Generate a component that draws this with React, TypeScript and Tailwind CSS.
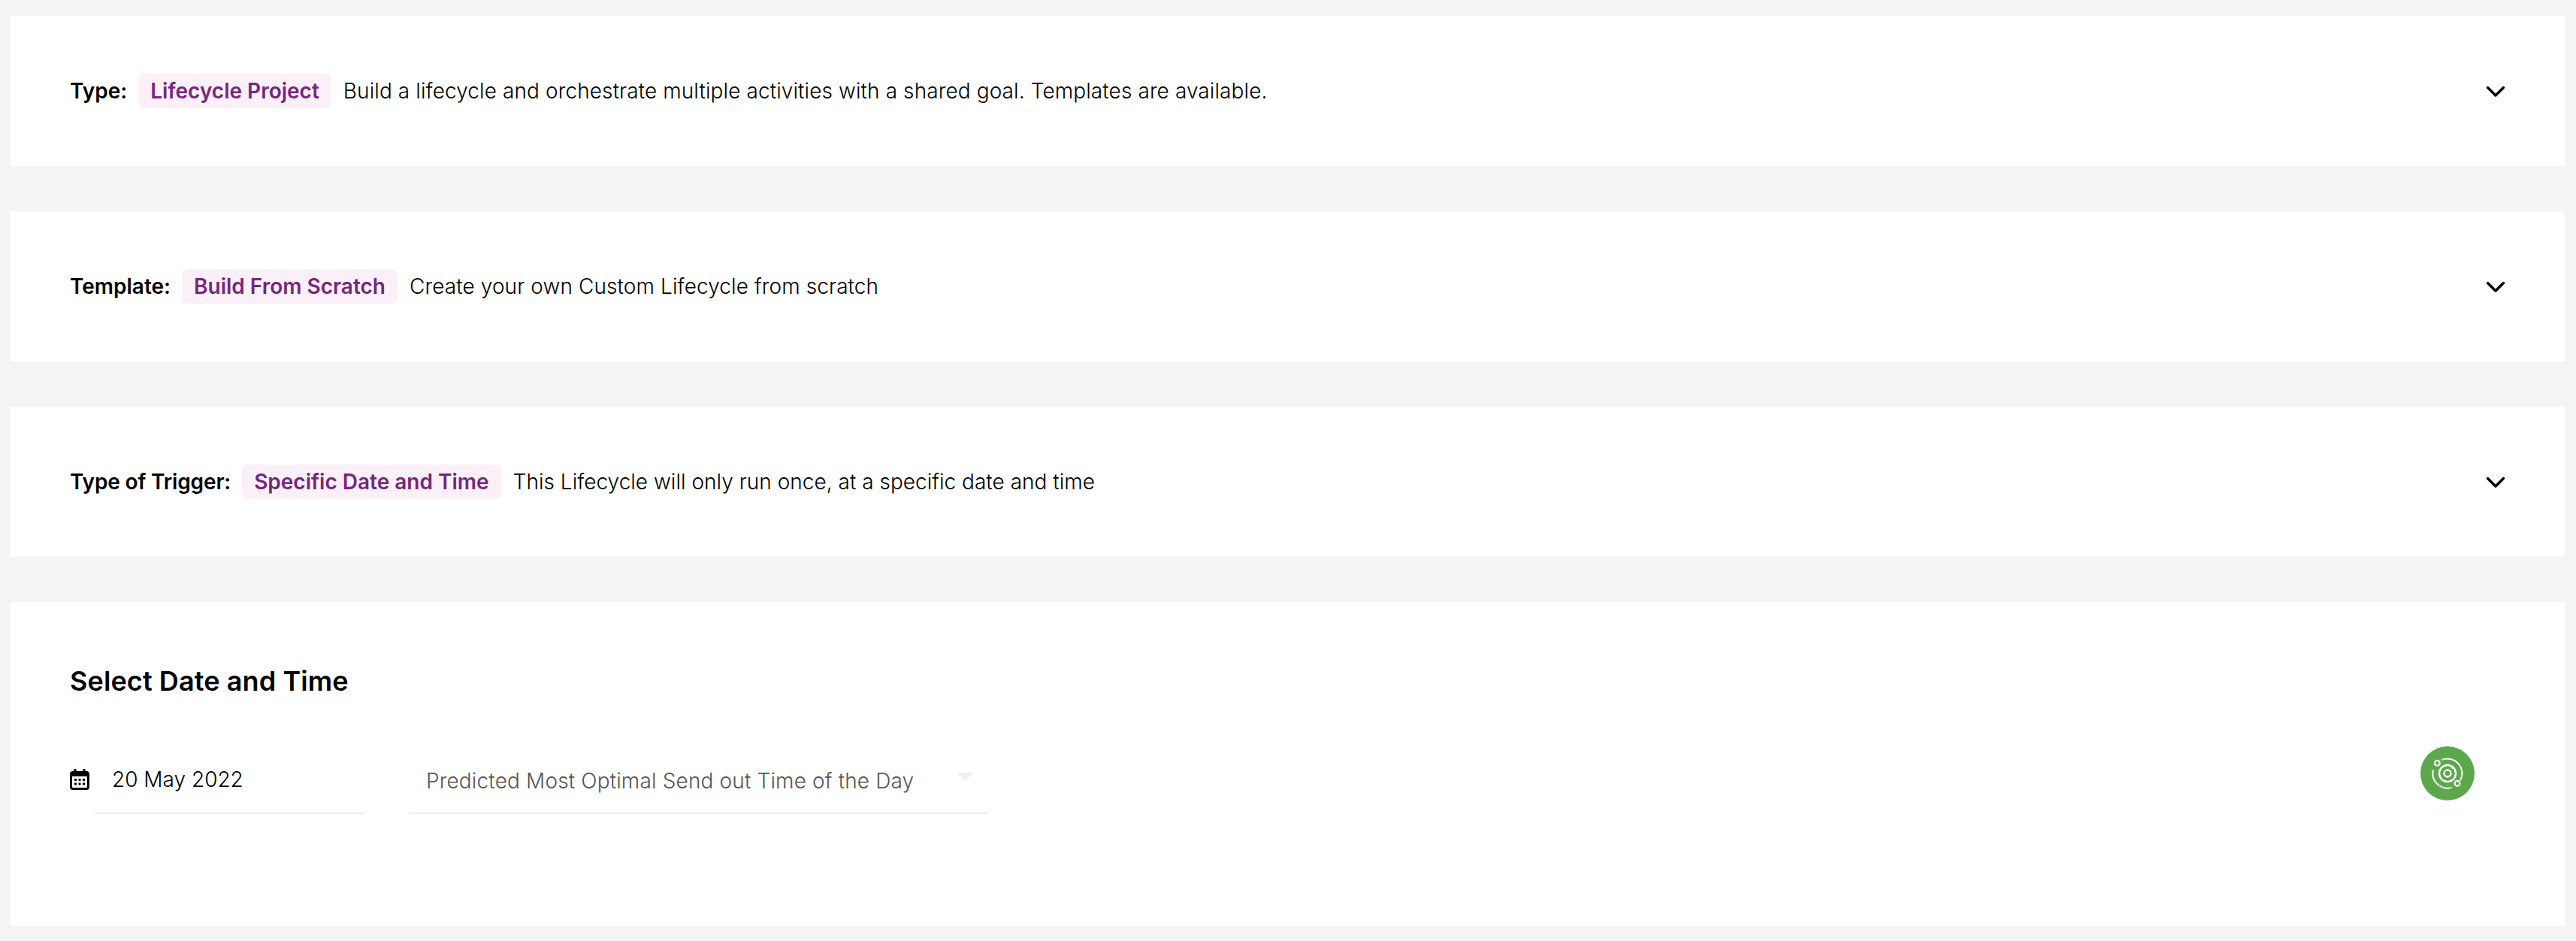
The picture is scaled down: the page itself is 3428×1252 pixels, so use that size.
import React from "react";

const Chevron = () => (
  <svg width="28" height="18" viewBox="0 0 28 18" fill="none" className="shrink-0 mt-[1px]">
    <path d="M3.5 3.5 L14 14 L24.5 3.5" stroke="#000" strokeWidth="3.4" strokeLinecap="round" strokeLinejoin="round" />
  </svg>
);

const Row = ({ label, chip, text, labelClass, textClass }: { label: string; chip: string; text: string; labelClass: string; textClass: string }) => (
  <div className="h-[200px] bg-white flex items-center pl-[80px] pr-[78px] text-[28px] text-black">
    <span className={`font-semibold ${labelClass}`}>{label}</span>
    <span className="ml-[15px] h-[46px] flex items-center px-4 rounded-lg bg-[#fcf0f8] text-[#76267f] font-semibold">{chip}</span>
    <span className={`ml-4 font-[270] ${textClass}`}>{text}</span>
    <span className="ml-auto flex"><Chevron /></span>
  </div>
);

export default function App() {
  return (
    <div className="h-[1252px] bg-[#f4f4f4] pt-[21px] px-[13px] pr-[15px] flex flex-col gap-[60px] font-['Inter',sans-serif]">
      <Row labelClass="" textClass="tracking-[0.1px]" label="Type:" chip="Lifecycle Project" text="Build a lifecycle and orchestrate multiple activities with a shared goal. Templates are available." />
      <Row labelClass="" textClass="tracking-[0.1px]" label="Template:" chip="Build From Scratch" text="Create your own Custom Lifecycle from scratch" />
      <Row labelClass="tracking-[-0.15px]" textClass="tracking-[0.02px]" label="Type of Trigger:" chip="Specific Date and Time" text="This Lifecycle will only run once, at a specific date and time" />
      <div className="h-[431px] bg-white pl-[80px] pr-[120px] pt-[83px]">
        <h2 className="text-[36px] leading-[44px] font-semibold text-black tracking-[0.1px]">Select Date and Time</h2>
        <div className="mt-[65px] flex items-start">
          <svg width="26" height="28" viewBox="0 0 26 28" className="mt-[30px] shrink-0">
            <rect x="1.5" y="4.5" width="23" height="22" rx="2.5" fill="none" stroke="#000" strokeWidth="3" />
            <rect x="1.5" y="4" width="23" height="6" fill="#000" />
            <rect x="5.5" y="0" width="3" height="6" fill="#000" />
            <rect x="17.5" y="0" width="3" height="6" fill="#000" />
            <g fill="#000">
              <rect x="6" y="13" width="3" height="3" /><rect x="11.5" y="13" width="3" height="3" /><rect x="17" y="13" width="3" height="3" />
              <rect x="6" y="18.5" width="3" height="3" /><rect x="11.5" y="18.5" width="3" height="3" /><rect x="17" y="18.5" width="3" height="3" />
            </g>
          </svg>
          <div className="ml-[6px] w-[360px] h-[90px] border-b-2 border-[#f0f0f0] pl-[24px] pt-[24px] text-[28px] leading-[40px] font-[270] text-black">20 May 2022</div>
          <div className="ml-[60px] w-[770px] h-[90px] border-b-2 border-[#f0f0f0] pl-[22px] pt-[26px] pr-[20px] flex items-start justify-between text-[28px] leading-[40px] font-[270] text-[#555555] tracking-[0.15px]">
            <span>Predicted Most Optimal Send out Time of the Day</span>
            <span className="mt-[9px] w-0 h-0 border-l-[11px] border-r-[11px] border-t-[12px] border-l-transparent border-r-transparent border-t-[#f0f0f0]" />
          </div>
          <div className="ml-auto w-[72px] h-[72px] rounded-full bg-[#5ca84c] flex items-center justify-center shrink-0">
            <svg width="44" height="44" viewBox="0 0 44 44" fill="none" stroke="#fff">
              <circle cx="22" cy="22" r="4.5" strokeWidth="2.4" />
              <circle cx="22" cy="22" r="11" strokeWidth="2.4" />
              <path d="M14.3 4 A19.5 19.5 0 0 1 39 31.3" strokeWidth="2" />
              <path d="M28.3 40.4 A19.5 19.5 0 0 1 3 17.3" strokeWidth="2" />
              <circle cx="8.3" cy="8.3" r="3.4" strokeWidth="2.2" />
              <circle cx="35" cy="35.3" r="3.4" strokeWidth="2.2" />
              <circle cx="29" cy="14" r="2" fill="#fff" stroke="none" />
            </svg>
          </div>
        </div>
      </div>
    </div>
  );
}
